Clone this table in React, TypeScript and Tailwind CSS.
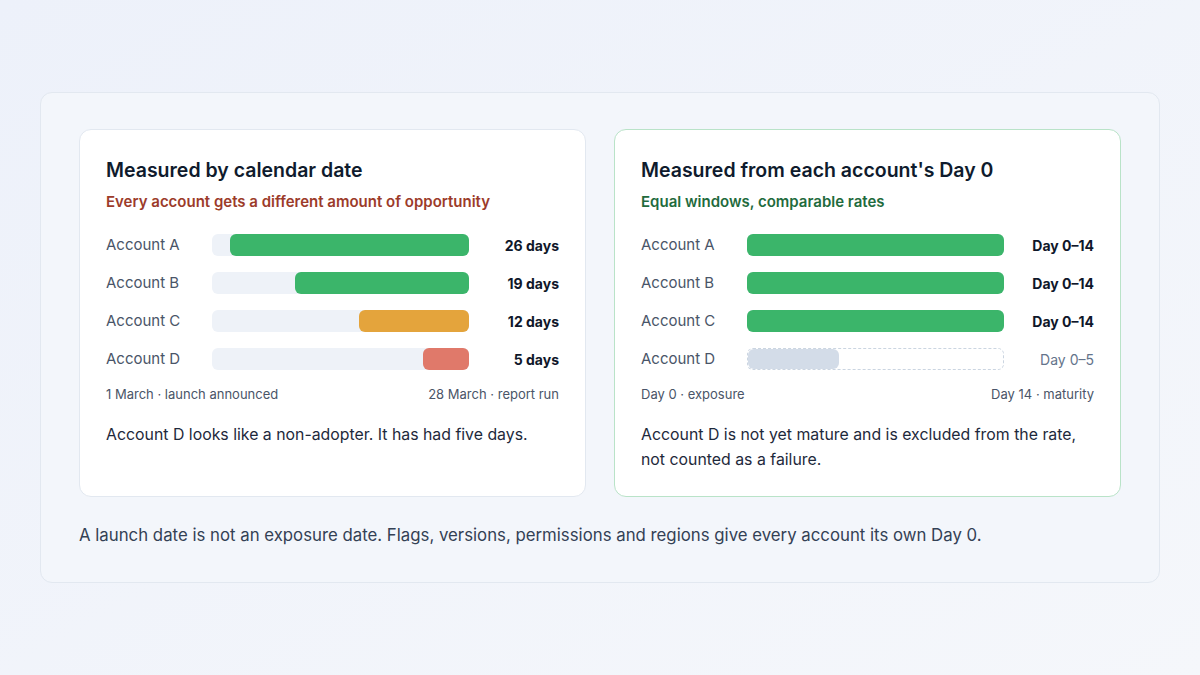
type Row = {
  label: string;
  fill: number;
  color: string;
  value: string;
  strong: boolean;
};

const calendarRows: Row[] = [
  { label: "Account A", fill: 26 / 28, color: "bg-[#3bb56a]", value: "26 days", strong: true },
  { label: "Account B", fill: 19 / 28, color: "bg-[#3bb56a]", value: "19 days", strong: true },
  { label: "Account C", fill: 12 / 28, color: "bg-[#e4a43c]", value: "12 days", strong: true },
  { label: "Account D", fill: 5 / 28, color: "bg-[#e0796a]", value: "5 days", strong: true },
];

const dayZeroRows: Row[] = [
  { label: "Account A", fill: 1, color: "bg-[#3bb56a]", value: "Day 0–14", strong: true },
  { label: "Account B", fill: 1, color: "bg-[#3bb56a]", value: "Day 0–14", strong: true },
  { label: "Account C", fill: 1, color: "bg-[#3bb56a]", value: "Day 0–14", strong: true },
  { label: "Account D", fill: 5 / 14, color: "bg-[#d3dce8]", value: "Day 0–5", strong: false },
];

function Bars({ rows, align, dashedLast }: { rows: Row[]; align: "left" | "right"; dashedLast?: boolean }) {
  return (
    <div className="mt-[22px] flex flex-col gap-4">
      {rows.map((row, i) => {
        const dashed = dashedLast && i === rows.length - 1;
        return (
          <div key={row.label} className="flex h-[22px] items-center">
            <span className="w-[106px] shrink-0 text-[15px] text-[#4a5568]">{row.label}</span>
            <div
              className={
                dashed
                  ? "flex h-[22px] w-[257px] shrink-0 rounded-md border border-dashed border-[#cbd5e1] bg-white"
                  : align === "right"
                    ? "flex h-[22px] w-[257px] shrink-0 justify-end rounded-md bg-[#eef2f8]"
                    : "flex h-[22px] w-[257px] shrink-0 rounded-md bg-[#eef2f8]"
              }
            >
              <div className={`h-full rounded-md ${row.color}`} style={{ width: `${row.fill * 100}%` }} />
            </div>
            <span
              className={
                row.strong
                  ? "flex-1 text-right text-[14px] font-bold text-[#0f172a]"
                  : "flex-1 text-right text-[14px] text-[#64748b]"
              }
            >
              {row.value}
            </span>
          </div>
        );
      })}
    </div>
  );
}

export default function App() {
  return (
    <div
      className="flex h-[675px] w-[1200px] items-start justify-center bg-gradient-to-br from-[#edf1fa] to-[#f5f7fb] pt-[92px]"
      style={{ fontFamily: "Inter, 'Noto Sans', sans-serif" }}
    >
      <div className="w-[1120px] rounded-xl border border-[#e2e8f0] bg-[#f3f6fb] px-[38px] pb-[34px] pt-[36px]">
        <div className="grid grid-cols-2 gap-[28px]">
          <div className="rounded-xl border border-[#e2e8f0] bg-white px-[26px] pb-[24px] pt-[26px]">
            <h2 className="text-[19.5px] font-semibold leading-[28px] text-[#0f1b2d]">Measured by calendar date</h2>
            <p className="mt-[8px] text-[15px] font-semibold leading-[20px] text-[#9c3b2a]">
              Every account gets a different amount of opportunity
            </p>
            <Bars rows={calendarRows} align="right" />
            <div className="mt-[15px] flex justify-between text-[13px] text-[#4a5568]">
              <span>1 March · launch announced</span>
              <span>28 March · report run</span>
            </div>
            <p className="mt-[17px] text-[15.85px] leading-[25px] text-[#1e293b]">
              Account D looks like a non-adopter. It has had five days.
            </p>
          </div>
          <div className="rounded-xl border border-[#b9e3c8] bg-white px-[26px] pb-[24px] pt-[26px]">
            <h2 className="text-[19.5px] font-semibold leading-[28px] text-[#0f1b2d]">Measured from each account's Day 0</h2>
            <p className="mt-[8px] text-[15px] font-semibold leading-[20px] text-[#1f6b3d]">Equal windows, comparable rates</p>
            <Bars rows={dayZeroRows} align="left" dashedLast />
            <div className="mt-[15px] flex justify-between text-[13px] text-[#4a5568]">
              <span>Day 0 · exposure</span>
              <span>Day 14 · maturity</span>
            </div>
            <p className="mt-[17px] text-[15.85px] leading-[25px] text-[#1e293b]">
              Account D is not yet mature and is excluded from the rate, not counted as a failure.
            </p>
          </div>
        </div>
        <p className="mt-[26px] text-[16.8px] leading-[25px] text-[#334155]">
          A launch date is not an exposure date. Flags, versions, permissions and regions give every account its own Day 0.
        </p>
      </div>
    </div>
  );
}
